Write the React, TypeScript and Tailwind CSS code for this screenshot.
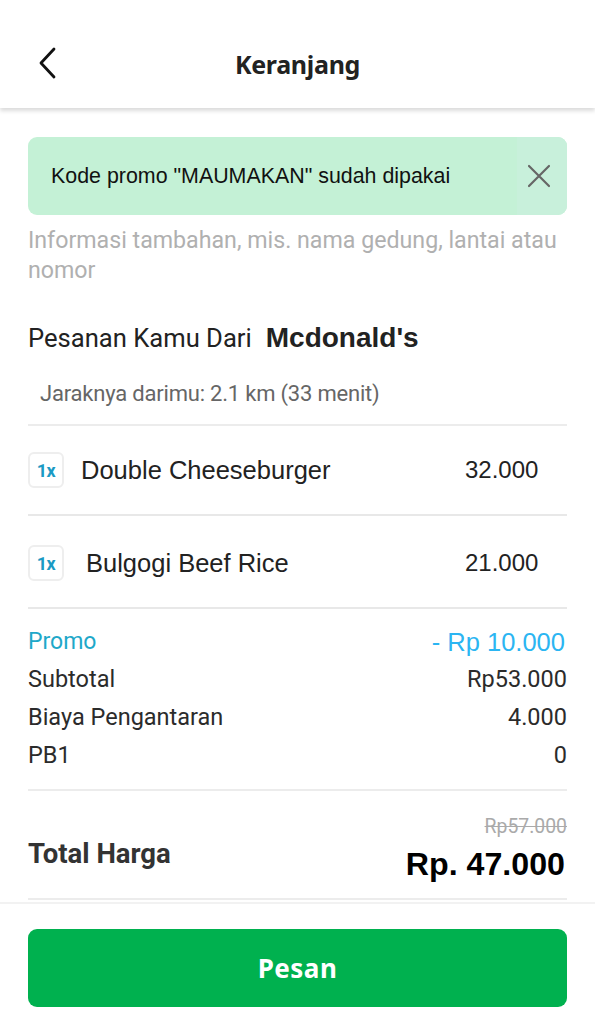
import React from "react";

function Item({ name, price, pad }: { name: string; price: string; pad: string }) {
  return (
    <div className="h-[90px] flex items-center border-b-2 border-[#e8e8e8]">
      <div className="w-[36px] h-[36px] rounded-[6px] border-2 border-[#eeeeee] flex items-center justify-center text-[#1b9ac4] text-[18px] font-bold tracking-[-0.5px] font-['Roboto',sans-serif]">
        1x
      </div>
      <div className={`flex-1 text-[25.5px] text-[#222] font-['Liberation_Sans',Arial,sans-serif] ${pad}`}>
        {name}
      </div>
      <div className="w-[102px] text-[24px] text-[#222] font-['Liberation_Sans',Arial,sans-serif]">
        {price}
      </div>
    </div>
  );
}

function Row({ label, value }: { label: string; value: string }) {
  return (
    <div className="h-[38px] flex items-center justify-between text-[23.5px] text-[#2b2b2b] font-['Roboto',sans-serif]">
      <span>{label}</span>
      <span>{value}</span>
    </div>
  );
}

export default function App() {
  return (
    <div className="w-[595px] h-[1024px] bg-white overflow-hidden flex flex-col">
      <div className="relative z-10 h-[108px] pt-[22px] bg-white flex items-center shadow-[0_3px_4px_rgba(0,0,0,0.14)]">
        <svg className="absolute left-[33px] top-[45px]" width="28" height="36" viewBox="0 0 28 36" fill="none">
          <path d="M21 4 L8 18 L21 32" stroke="#111" strokeWidth="2.8" strokeLinecap="round" strokeLinejoin="round" />
        </svg>
        <div className="w-full text-center text-[25px] font-bold text-[#222] tracking-[-0.3px] font-['Noto_Sans',sans-serif]">
          Keranjang
        </div>
      </div>

      <div className="px-[28px] flex-1 flex flex-col">
        <div className="mt-[29px] h-[78px] rounded-[9px] bg-[#c4f1d6] flex items-center overflow-hidden">
          <div className="flex-1 pl-[23px] text-[21.4px] text-[#111] font-['Liberation_Sans',Arial,sans-serif]">
            Kode promo "MAUMAKAN" sudah dipakai
          </div>
          <div className="w-[50px] h-full bg-[#c8f0db] flex items-center justify-start">
            <svg width="24" height="24" viewBox="0 0 24 24" fill="none" className="ml-[10px]">
              <path d="M2 2 L22 22 M22 2 L2 22" stroke="#666" strokeWidth="2.2" strokeLinecap="round" />
            </svg>
          </div>
        </div>

        <div className="mt-[10px] text-[23.2px] leading-[30px] text-[#b0b0b0] font-['Roboto',sans-serif]">
          Informasi tambahan, mis. nama gedung, lantai atau nomor
        </div>

        <div className="mt-[33px] h-[40px] flex items-center">
          <span className="text-[25.6px] text-[#222] font-['Roboto',sans-serif]">Pesanan Kamu Dari</span>
          <span className="ml-[14px] text-[28px] font-bold text-[#222] font-['Liberation_Sans',Arial,sans-serif]">
            Mcdonald's
          </span>
        </div>

        <div className="mt-[20px] h-[30px] pl-[12px] flex items-center text-[22px] text-[#666] tracking-[-0.2px] font-['Roboto',sans-serif]">
          Jaraknya darimu: 2.1 km (33 menit)
        </div>

        <div className="mt-[16px] h-[2px] bg-[#ececec]" />

        <Item name="Double Cheeseburger" price="32.000" pad="pl-[17px]" />
        <div className="pt-[3px]">
          <Item name="Bulgogi Beef Rice" price="21.000" pad="pl-[22px]" />
        </div>

        <div className="pt-[14px] pb-[14px] border-b-2 border-[#ececec]">
          <div className="h-[38px] flex items-center justify-between">
            <span className="text-[23px] text-[#1ea8c9] font-['Roboto',sans-serif]">Promo</span>
            <span className="text-[25.5px] text-[#2bb5f2] mr-[2px] font-['Liberation_Sans',Arial,sans-serif]">
              - Rp 10.000
            </span>
          </div>
          <Row label="Subtotal" value="Rp53.000" />
          <Row label="Biaya Pengantaran" value="4.000" />
          <Row label="PB1" value="0" />
        </div>

        <div className="h-[109px] flex justify-between border-b-2 border-[#ececec]">
          <span className="mt-[46px] h-[34px] leading-[34px] text-[27.5px] font-bold text-[#333] font-['Roboto',sans-serif]">
            Total Harga
          </span>
          <div className="flex flex-col items-end pt-[25px]">
            <span className="text-[19.4px] text-[#aaa] line-through leading-[22px] font-['Roboto',sans-serif]">
              Rp57.000
            </span>
            <span className="mt-[7px] text-[32.2px] font-bold text-black leading-[38px] mr-[2px] font-['Liberation_Sans',Arial,sans-serif]">
              Rp. 47.000
            </span>
          </div>
        </div>
      </div>

      <div className="border-t-2 border-[#f2f2f2] px-[28px] pt-[25px] pb-[17px]">
        <div className="h-[78px] rounded-[9px] bg-[#00b14f] flex items-center justify-center text-white text-[26px] font-bold tracking-[0.5px] font-['Noto_Sans',sans-serif]">
          Pesan
        </div>
      </div>
    </div>
  );
}
